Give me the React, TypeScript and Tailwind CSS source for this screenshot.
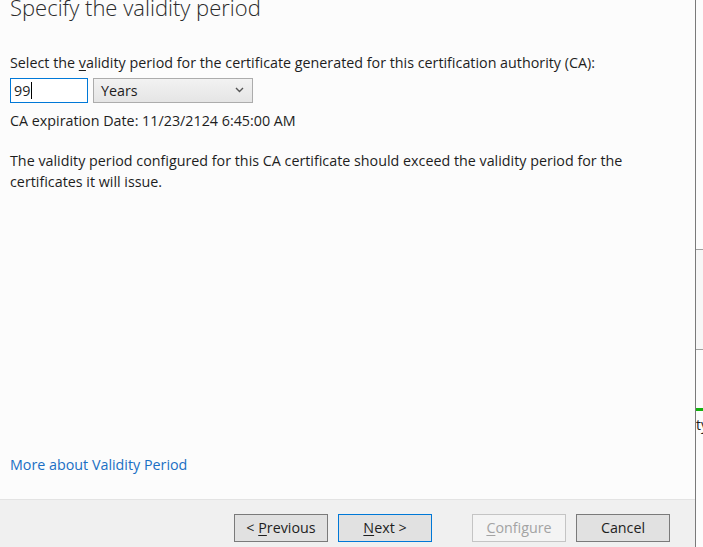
import React from 'react';

const font = { fontFamily: '"Open Sans", "Noto Sans", sans-serif' };

function WizardButton({
  label,
  hotkey,
  rest,
  variant = 'normal',
}: {
  label?: string;
  hotkey: string;
  rest: string;
  variant?: 'normal' | 'default' | 'disabled';
}) {
  const tone =
    variant === 'default'
      ? 'border-[#0078d7] bg-[#e1e1e1] text-[#1e1e1e]'
      : variant === 'disabled'
        ? 'border-[#c4c4c4] bg-[#f4f4f4] text-[#a3a3a3]'
        : 'border-[#7a7a7a] bg-[#e1e1e1] text-[#1e1e1e]';
  return (
    <button
      className={`flex h-[28px] w-[94px] items-center justify-center whitespace-pre border text-[14.3px] leading-none ${tone}`}
    >
      {label}
      <span className="underline underline-offset-2">{hotkey}</span>
      {rest}
    </button>
  );
}

export default function App() {
  return (
    <div className="flex h-[547px] w-[703px] overflow-hidden bg-[#fcfcfc]" style={font}>
      <div className="flex w-[695px] flex-col">
        <div className="flex flex-1 flex-col px-[10px] text-[14.3px] leading-[21px] text-[#1e1e1e]">
          <h1 className="-mt-[9px] text-[22px] font-light leading-[32px] text-[#2b2b2b]">
            Specify the validity period
          </h1>
          <p className="mt-[29px]">
            Select the <span className="underline underline-offset-2">v</span>alidity period for the
            certificate generated for this certification authority (CA):
          </p>
          <div className="mt-[5px] flex gap-[5px]">
            <div className="flex h-[25px] w-[78px] items-center border border-[#0078d7] bg-white pl-[3px]">
              <span>99</span>
              <span className="ml-[1px] h-[17px] w-[1px] bg-black" />
            </div>
            <div className="flex h-[25px] w-[160px] items-center justify-between border border-[#acacac] bg-gradient-to-b from-[#f2f2f2] to-[#e5e5e5] pl-[7px] pr-[8px]">
              <span>Years</span>
              <svg width="9" height="6" viewBox="0 0 9 6" className="mb-[2px]">
                <path d="M1 1 L4.5 4.5 L8 1" fill="none" stroke="#555" strokeWidth="1.4" />
              </svg>
            </div>
          </div>
          <p className="mt-[7px]">CA expiration Date: 11/23/2124 6:45:00 AM</p>
          <p className="mt-[19px]">
            The validity period configured for this CA certificate should exceed the validity period for the
            <br />
            certificates it will issue.
          </p>
          <div className="flex-1" />
          <a className="mb-[24px] text-[#1a6fc4]">More about Validity Period</a>
        </div>
        <div className="flex h-[48px] items-start justify-end border-t border-[#e3e3e3] bg-[#f0f0f0] pr-[25px] pt-[14px]">
          <div className="flex">
            <WizardButton label="< " hotkey="P" rest="revious" />
            <div className="ml-[10px]">
              <WizardButton hotkey="N" rest="ext >" variant="default" />
            </div>
            <div className="ml-[40px]">
              <WizardButton hotkey="C" rest="onfigure" variant="disabled" />
            </div>
            <div className="ml-[10px]">
              <WizardButton hotkey="" rest="Cancel" />
            </div>
          </div>
        </div>
      </div>
      <div className="w-[1px] bg-[#7a7a7a]" />
      <div className="flex w-[7px] flex-col overflow-hidden">
        <div className="h-[249px]" />
        <div className="h-[101px] border-y border-[#a0a0a0] bg-[#f7f7f7]" />
        <div className="h-[58px]" />
        <div className="h-[3px] bg-[#13b20e]" />
        <div className="mt-[3px] whitespace-nowrap text-[14px] leading-[21px] text-[#1e1e1e]">ty</div>
      </div>
    </div>
  );
}
